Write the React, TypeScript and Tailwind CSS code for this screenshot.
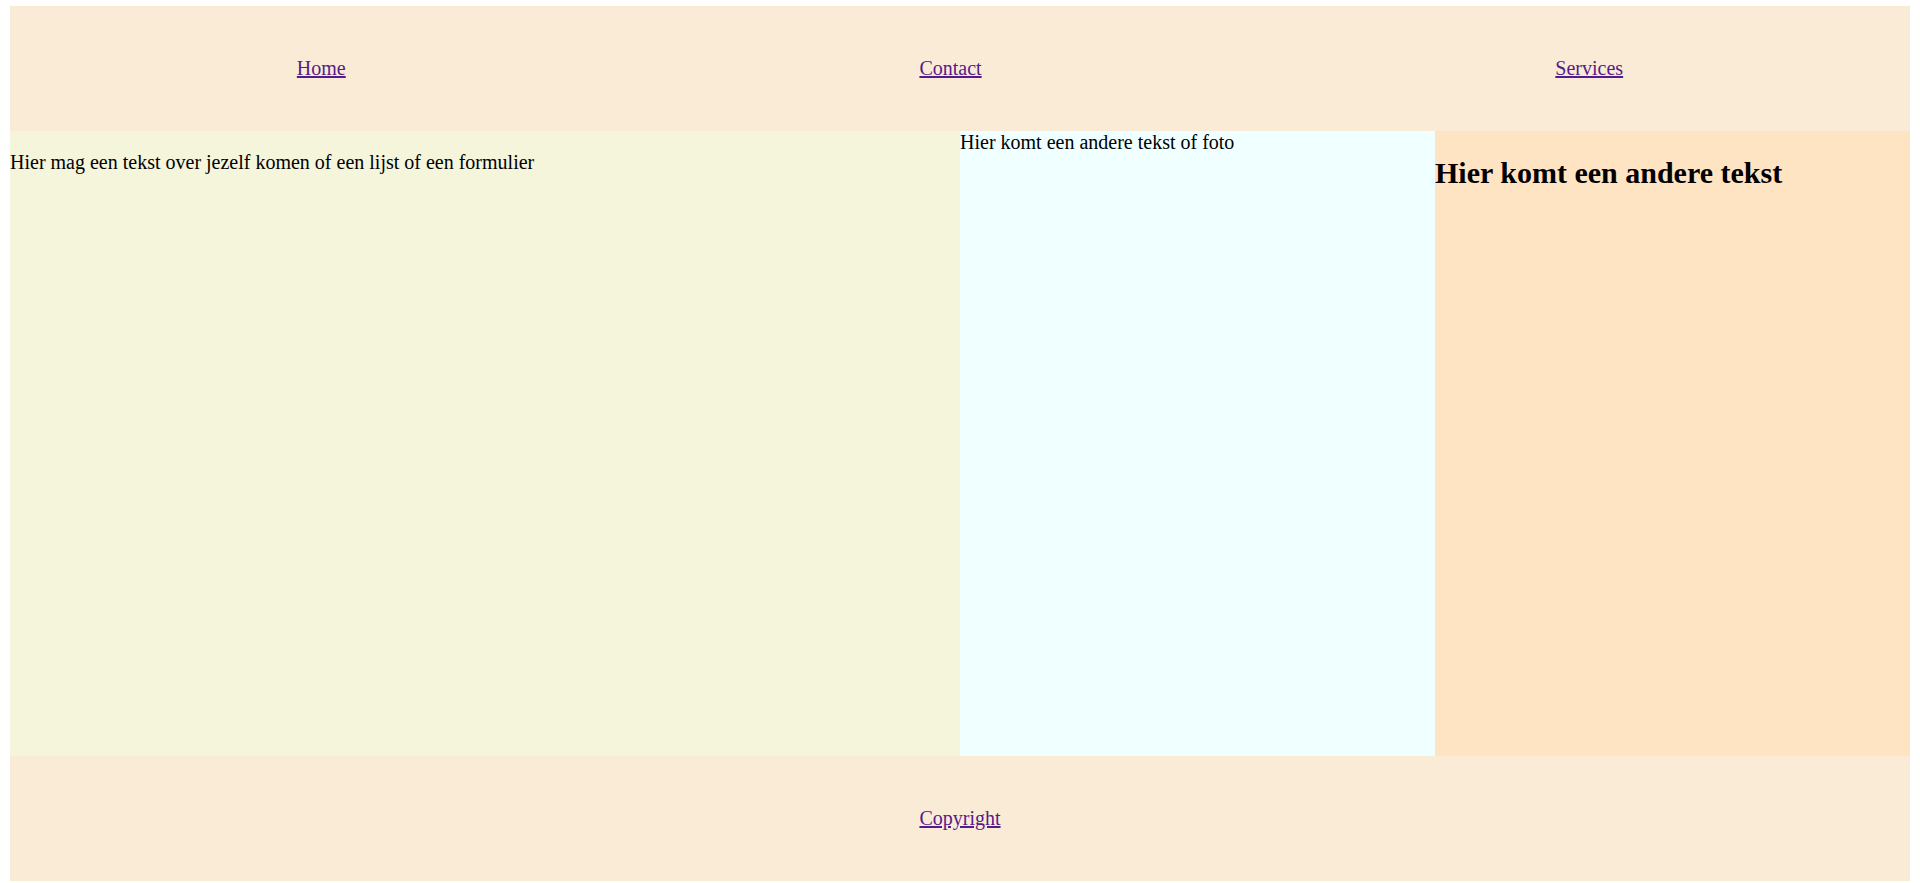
export default function App() {
  return (
    <div className="min-h-screen bg-white px-[10px] pt-[6px] font-['Liberation_Serif','Times_New_Roman',serif] text-[20px] leading-[normal] text-black">
      {/* navigatie */}
      <nav className="flex h-[125px] items-center justify-around bg-[#faebd7]">
        <a href="#" className="text-[#551a8b] underline">
          Home
        </a>
        <a href="#" className="text-[#551a8b] underline">
          Contact
        </a>
        <a href="#" className="text-[#551a8b] underline">
          Services
        </a>
      </nav>

      {/* inhoud in drie kolommen */}
      <main className="grid h-[625px] grid-cols-[2fr_1fr_1fr]">
        <section className="bg-[#f5f5dc]">
          <p className="my-[20px]">Hier mag een tekst over jezelf komen of een lijst of een formulier</p>
        </section>
        <section className="bg-[#f0ffff]">Hier komt een andere tekst of foto</section>
        <section className="bg-[#ffe4c4]">
          <h2 className="my-[25px] text-[30px] font-bold">Hier komt een andere tekst</h2>
        </section>
      </main>

      <footer className="flex h-[125px] items-center justify-center bg-[#faebd7]">
        <a href="#" className="text-[#551a8b] underline">
          Copyright
        </a>
      </footer>
    </div>
  );
}
